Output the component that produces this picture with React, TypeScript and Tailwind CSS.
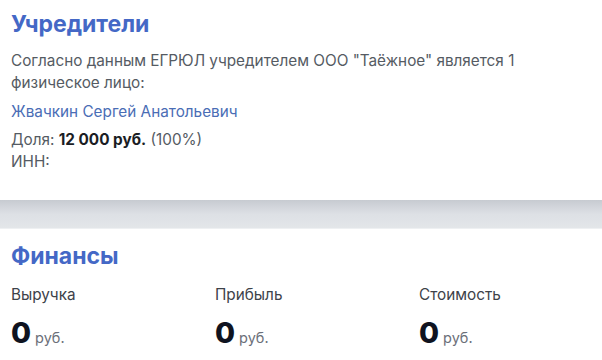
export default function App() {
  return (
    <div className="w-[602px] h-[360px] overflow-hidden bg-white font-['Inter',_sans-serif]">
      <section className="bg-white px-[11px] pt-[8px] h-[200px]">
        <h2 className="text-[23px] leading-[32px] font-bold text-[#4468c6]">Учредители</h2>
        <p className="mt-[10px] max-w-[530px] text-[15.3px] leading-[22px] text-[#555b63]">
          Согласно данным ЕГРЮЛ учредителем ООО "Таёжное" является 1 физическое лицо:
        </p>
        <div className="mt-[7px] text-[15.3px] leading-[22px] text-[#4a6db5]">Жвачкин Сергей Анатольевич</div>
        <div className="mt-[6px] text-[15.3px] leading-[22px] text-[#555b63]">
          Доля: <span className="font-bold text-[#1a1d24]">12 000 руб.</span> (100%)
        </div>
        <div className="text-[15.3px] leading-[22px] text-[#555b63]">ИНН:</div>
      </section>
      <div className="h-[29px] bg-gradient-to-b from-[#c7cbd1] via-[#dde0e5] to-[#e3e6e9] border-b border-[#eef0f2]" />
      <section className="bg-white px-[11px] pt-[11px]">
        <h2 className="text-[23px] leading-[32px] font-bold text-[#4468c6]">Финансы</h2>
        <div className="mt-[12px] grid grid-cols-[204px_204px_1fr]">
          {["Выручка", "Прибыль", "Стоимость"].map((label) => (
            <div key={label}>
              <div className="text-[15.3px] leading-[22px] text-[#3d4249]">{label}</div>
              <div className="mt-[11px] flex items-baseline gap-[4px]">
                <span className="text-[29px] leading-[32px] font-extrabold text-[#0f1320]">0</span>
                <span className="text-[14.5px] text-[#6b7079]">руб.</span>
              </div>
            </div>
          ))}
        </div>
      </section>
    </div>
  );
}
